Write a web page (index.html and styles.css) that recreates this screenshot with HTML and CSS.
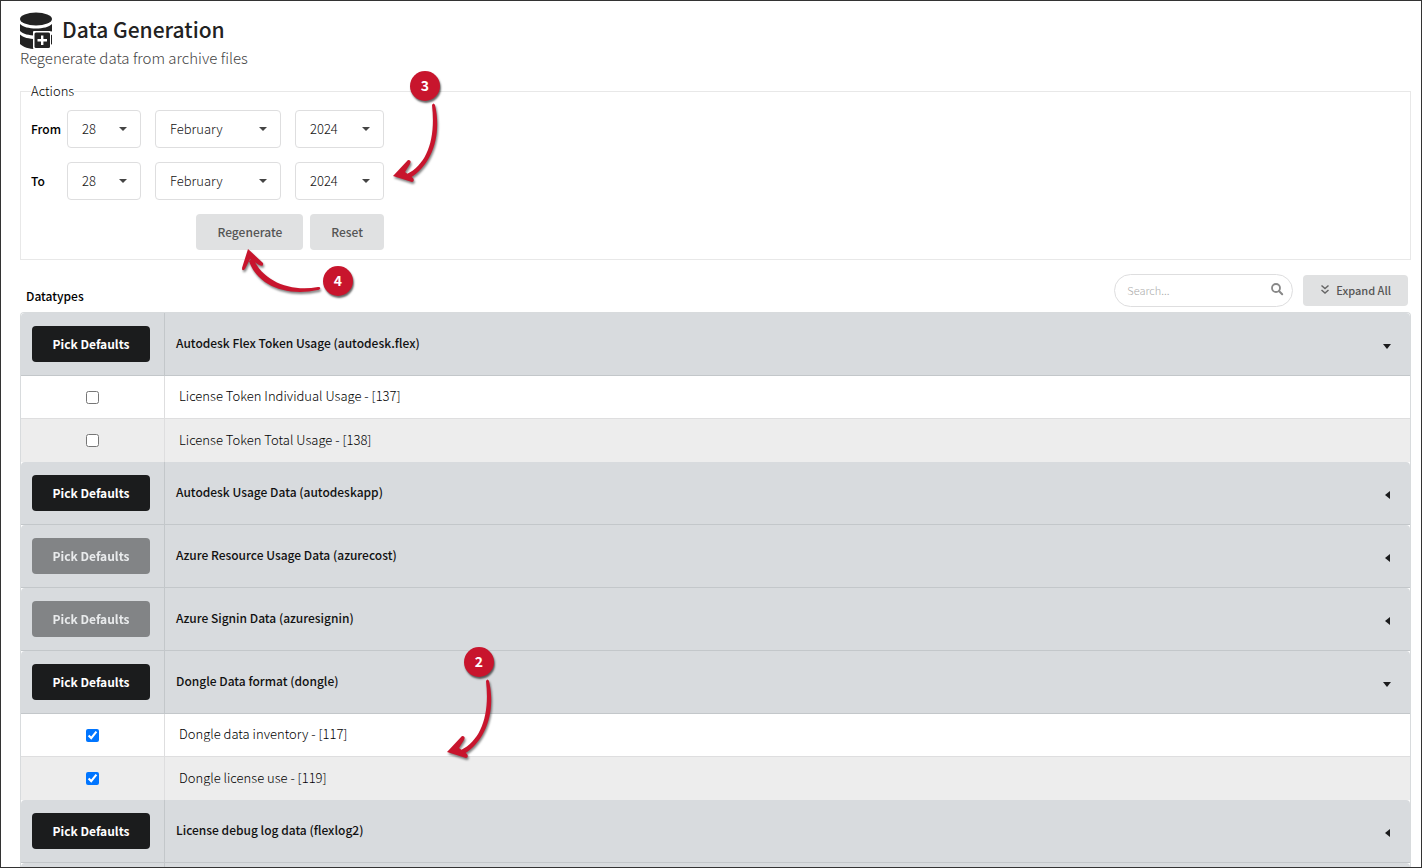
FILE: index.html
```html
<!DOCTYPE html>
<html lang="en">
<head>
    <meta charset="UTF-8">
    <meta name="viewport" content="width=device-width, initial-scale=1.0">
    <title>Data Generation</title>
    <link rel="stylesheet" href="styles.css">
</head>
<body>
    <div class="page">
        <header class="page-header">
            <svg class="db-icon" viewBox="0 0 34 38" aria-hidden="true">
                <g fill="#222">
                    <ellipse cx="16" cy="8" rx="16" ry="6.500"/>
                    <path d="M0 13c3 3 9 4.500 16 4.500S29 16 32 13v7c-3 3-9 4.500-16 4.500S3 23 0 20z"/>
                    <path d="M0 23.500c3 3 9 4.500 16 4.500s13-1.500 16-4.500V33c-3 3-9 5-16 5S3 36 0 33z"/>
                </g>
                <rect x="13" y="20" width="18" height="18" rx="1" fill="#fff"/>
                <rect x="14.500" y="21.500" width="15.500" height="15.500" rx="1.500" fill="#222"/>
                <path d="M22.200 24.500v9.500M17.500 29.200h9.500" stroke="#fff" stroke-width="2.400"/>
            </svg>
            <h1>Data Generation</h1>
        </header>
        <p class="subtitle">Regenerate data from archive files</p>

        <form>
            <fieldset class="actions">
                <legend>Actions</legend>
                <div class="date-grid">
                    <label class="date-label" for="from_day">From</label>
                    <div class="select"><select id="from_day"><option>28</option></select></div>
                    <div class="select"><select id="from_month" aria-label="From month"><option>February</option></select></div>
                    <div class="select"><select id="from_year" aria-label="From year"><option>2024</option></select></div>
                    <label class="date-label" for="to_day">To</label>
                    <div class="select"><select id="to_day"><option>28</option></select></div>
                    <div class="select"><select id="to_month" aria-label="To month"><option>February</option></select></div>
                    <div class="select"><select id="to_year" aria-label="To year"><option>2024</option></select></div>
                    <div class="buttons">
                        <button type="button" class="btn">Regenerate</button>
                        <button type="reset" class="btn">Reset</button>
                    </div>
                </div>
            </fieldset>
        </form>

        <div class="toolbar">
            <h2>Datatypes</h2>
            <div class="search">
                <input type="text" id="search" placeholder="Search..." aria-label="Search">
                <svg viewBox="0 0 14 14" aria-hidden="true">
                    <circle cx="6" cy="6" r="4" fill="none" stroke="#888" stroke-width="1.800"/>
                    <path d="M9.200 9.200l3 3" stroke="#888" stroke-width="2" stroke-linecap="round"/>
                </svg>
            </div>
            <button type="button" class="btn btn-small">
                <svg viewBox="0 0 10 11" aria-hidden="true">
                    <path d="M1.500 1.500L5 4.500l3.500-3M1.500 6L5 9l3.500-3" fill="none" stroke="#666" stroke-width="1.500"/>
                </svg>
                Expand All
            </button>
        </div>

        <table class="datatypes">
            <tbody>
                <tr class="group">
                    <td><button type="button" class="btn-dark">Pick Defaults</button></td>
                    <th scope="rowgroup"><div class="group-title">Autodesk Flex Token Usage (autodesk.flex)<span class="caret open"></span></div></th>
                </tr>
                <tr class="item">
                    <td><input type="checkbox" id="type_137"></td>
                    <td><label for="type_137">License Token Individual Usage - [137]</label></td>
                </tr>
                <tr class="item alt">
                    <td><input type="checkbox" id="type_138"></td>
                    <td><label for="type_138">License Token Total Usage - [138]</label></td>
                </tr>
            </tbody>
            <tbody>
                <tr class="group">
                    <td><button type="button" class="btn-dark">Pick Defaults</button></td>
                    <th scope="rowgroup"><div class="group-title">Autodesk Usage Data (autodeskapp)<span class="caret"></span></div></th>
                </tr>
            </tbody>
            <tbody>
                <tr class="group">
                    <td><button type="button" class="btn-dark" disabled>Pick Defaults</button></td>
                    <th scope="rowgroup"><div class="group-title">Azure Resource Usage Data (azurecost)<span class="caret"></span></div></th>
                </tr>
            </tbody>
            <tbody>
                <tr class="group">
                    <td><button type="button" class="btn-dark" disabled>Pick Defaults</button></td>
                    <th scope="rowgroup"><div class="group-title">Azure Signin Data (azuresignin)<span class="caret"></span></div></th>
                </tr>
            </tbody>
            <tbody>
                <tr class="group">
                    <td><button type="button" class="btn-dark">Pick Defaults</button></td>
                    <th scope="rowgroup"><div class="group-title">Dongle Data format (dongle)<span class="caret open"></span></div></th>
                </tr>
                <tr class="item">
                    <td><input type="checkbox" id="type_117" checked></td>
                    <td><label for="type_117">Dongle data inventory - [117]</label></td>
                </tr>
                <tr class="item alt">
                    <td><input type="checkbox" id="type_119" checked></td>
                    <td><label for="type_119">Dongle license use - [119]</label></td>
                </tr>
            </tbody>
            <tbody>
                <tr class="group">
                    <td><button type="button" class="btn-dark">Pick Defaults</button></td>
                    <th scope="rowgroup"><div class="group-title">License debug log data (flexlog2)<span class="caret"></span></div></th>
                </tr>
            </tbody>
            <tbody>
                <tr class="group">
                    <td></td>
                    <th scope="rowgroup"></th>
                </tr>
            </tbody>
        </table>

        <!-- step markers -->
        <div class="step step-3">
            <span class="step-number">3</span>
            <svg class="arrow-down" viewBox="0 0 50 82" aria-hidden="true">
                <path d="M40 2C41 0 42 0 43 2C50 32 40 62 18 75L15 71C35 61 44 36 40 2z"/>
                <path d="M1 73L16 57Q20 57 18 61L13 69L21 75Q23 78 20 79z"/>
            </svg>
        </div>
        <div class="step step-4">
            <span class="step-number">4</span>
            <svg class="arrow-left" viewBox="0 0 80 46" aria-hidden="true">
                <path d="M77 38C80 38 80 40 77 41C45 48 16 36 8 12L12 9C22 33 50 43 77 38z"/>
                <path d="M7 0L22 14Q23 18 18 16L9 10L4 20Q1 23 1 19z"/>
            </svg>
        </div>
        <div class="step step-2">
            <span class="step-number">2</span>
            <svg class="arrow-down" viewBox="0 0 50 82" aria-hidden="true">
                <path d="M40 2C41 0 42 0 43 2C50 32 40 62 18 75L15 71C35 61 44 36 40 2z"/>
                <path d="M1 73L16 57Q20 57 18 61L13 69L21 75Q23 78 20 79z"/>
            </svg>
        </div>
    </div>
</body>
</html>
```
FILE: styles.css
```css
* {
    box-sizing: border-box;
}
body {
    margin: 0;
    font-family: "Noto Sans CJK SC", "Noto Sans", sans-serif;
    font-size: 13px;
    font-weight: 300;
    line-height: 18px;
    color: #000;
    background-color: #fff;
}
button, input, select {
    font-family: inherit;
    font-size: 13px;
}
.page {
    position: relative;
    height: 100vh;
    padding: 10px 10px 0 19px;
    border: 1px solid #333;
    overflow: hidden;
}
.page-header {
    display: flex;
    align-items: center;
    gap: 8px;
    height: 37px;
}
.db-icon {
    width: 34px;
    height: 38px;
}
h1 {
    margin: 0;
    padding-bottom: 2px;
    font-size: 21px;
    font-weight: 500;
    line-height: 34px;
    color: #222;
}
.subtitle {
    margin: 0 0 14px;
    font-size: 15px;
    line-height: 20px;
    color: #444;
}
.actions {
    margin: 0;
    padding: 10px 10px 9px;
    border: 1px solid #e8e8e8;
}
legend {
    padding: 0;
}
.date-grid {
    display: grid;
    grid-template-columns: 22px 74px 126px 89px;
    gap: 14px;
    align-items: center;
}
.date-label {
    font-size: 12px;
    font-weight: 500;
    white-space: nowrap;
}
.select {
    position: relative;
}
.select select {
    display: block;
    width: 100%;
    height: 38px;
    padding: 0 14px 2px;
    border: 1px solid #dededf;
    border-radius: 4px;
    background-color: #fff;
    color: #111;
    font-weight: 300;
    appearance: none;
}
.select::after {
    content: "";
    position: absolute;
    top: 17px;
    right: 14px;
    border: 4px solid transparent;
    border-top-color: #444;
    border-bottom: 0;
}
.buttons {
    grid-column: 1 / -1;
    display: flex;
    justify-content: flex-end;
    gap: 7px;
}
.btn {
    height: 36px;
    padding: 0 21px 2px;
    border: 0;
    border-radius: 4px;
    background-color: #e0e1e2;
    color: #555;
    font-size: 12px;
    font-weight: 500;
}
.btn-small {
    display: flex;
    align-items: center;
    gap: 6px;
    height: 31px;
    padding: 0 17px 2px;
    font-size: 11px;
}
.btn-small svg {
    width: 10px;
    height: 11px;
}
.toolbar {
    display: flex;
    align-items: center;
    gap: 10px;
    padding: 14px 3px 5px 6px;
}
h2 {
    flex: 1;
    margin: 10px 0 0;
    font-size: 12px;
    font-weight: 500;
    line-height: 18px;
}
.search {
    position: relative;
}
.search input {
    display: block;
    width: 179px;
    height: 33px;
    padding: 0 34px 2px 12px;
    border: 1px solid #dededf;
    border-radius: 17px;
    font-size: 11px;
    font-weight: 300;
}
.search input::placeholder {
    color: #aaa;
}
.search svg {
    position: absolute;
    top: 8px;
    right: 9px;
    width: 14px;
    height: 14px;
}
.datatypes {
    width: 100%;
    border: 1px solid #d8dbdd;
    border-bottom: 0;
    border-radius: 4px 4px 0 0;
    border-spacing: 0;
    table-layout: fixed;
}
.datatypes td, .datatypes th {
    padding: 0 11px;
    text-align: left;
}
.datatypes td:first-child {
    width: 144px;
    border-right: 1px solid #dededf;
}
.group {
    height: 63px;
}
.group td, .group th {
    border-bottom: 1px solid #c3c7ca;
    background-color: #d8dbde;
}
.group td:first-child {
    border-right-color: #c3c7ca;
    border-top-left-radius: 4px;
}
.group th {
    border-top-right-radius: 4px;
}
.group-title {
    display: flex;
    justify-content: space-between;
    align-items: center;
    padding-bottom: 2px;
    font-size: 12px;
    font-weight: 500;
    color: #111;
}
.caret {
    margin: 6px 9px 0 0;
    border: 4px solid transparent;
    border-right: 5px solid #1b1c1d;
    border-left: 0;
}
.caret.open {
    margin-right: 8px;
    border: 4px solid transparent;
    border-top: 5px solid #1b1c1d;
    border-bottom: 0;
}
.btn-dark {
    display: block;
    width: 118px;
    height: 36px;
    padding: 0 0 2px;
    border: 0;
    border-radius: 4px;
    background-color: #1b1c1d;
    color: #fff;
    font-size: 12px;
    font-weight: 700;
}
.btn-dark:disabled {
    opacity: 0.45;
}
.item {
    height: 43px;
}
.item.alt td {
    background-color: #ededed;
}
.item td:first-child {
    text-align: center;
}
.item td:last-child {
    padding: 0 14px 2px;
}
.item:not(.alt) td {
    border-bottom: 1px solid #dededf;
}
.item input {
    display: block;
    width: 13px;
    height: 13px;
    margin: 0 auto;
}
.step {
    position: absolute;
}
.step-number {
    display: block;
    width: 30px;
    height: 30px;
    border-radius: 50%;
    background-color: #c8152d;
    box-shadow: 1px 2px 2px rgba(0, 0, 0, 0.6);
    color: #fff;
    font-size: 14px;
    font-weight: 700;
    line-height: 28px;
    text-align: center;
}
.step svg {
    position: absolute;
    fill: #c8152d;
    filter: drop-shadow(1px 2px 1px rgba(0, 0, 0, 0.5));
    overflow: visible;
}
.arrow-down {
    top: 32px;
    left: -18px;
    width: 50px;
    height: 82px;
}
.arrow-left {
    top: -17px;
    left: -82px;
    width: 80px;
    height: 46px;
}
.step-3 {
    top: 70px;
    left: 409px;
}
.step-4 {
    top: 265px;
    left: 322px;
}
.step-2 {
    top: 646px;
    left: 463px;
}
```
